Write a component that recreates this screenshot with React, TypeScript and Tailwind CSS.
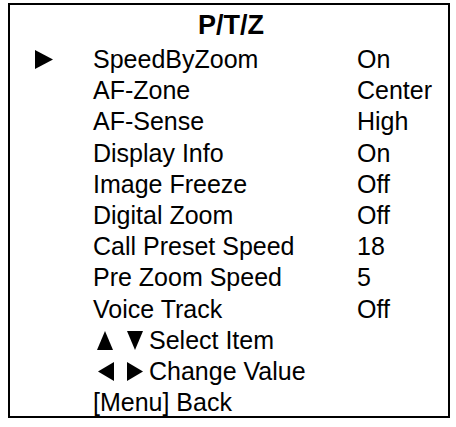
const rows: [string, string][] = [
  ['SpeedByZoom', 'On'],
  ['AF-Zone', 'Center'],
  ['AF-Sense', 'High'],
  ['Display Info', 'On'],
  ['Image Freeze', 'Off'],
  ['Digital Zoom', 'Off'],
  ['Call Preset Speed', '18'],
  ['Pre Zoom Speed', '5'],
  ['Voice Track', 'Off'],
];

const Tri = ({ dir }: { dir: 'up' | 'down' | 'left' | 'right' }) => {
  const pts = {
    up: '8,0 16,19 0,19',
    down: '0,0 16,0 8,19',
    left: '0,9.5 16,0 16,19',
    right: '0,0 16,9.5 0,19',
  }[dir];
  return (
    <svg width="16" height="19" viewBox="0 0 16 19" className="shrink-0">
      <polygon points={pts} fill="#000" />
    </svg>
  );
};

export default function App() {
  return (
    <div className="w-[456px] h-[427px] bg-white pt-[3px] pl-[8px] font-['Liberation_Sans',Arial,sans-serif] text-black">
      <div className="w-[442px] h-[415px] border-2 border-black">
        <div className="h-[39px] pt-[5px] pl-[4px] text-center text-[27px] font-bold leading-[30px]">P/T/Z</div>
        <div className="flex flex-col">
          {rows.map(([label, value], i) => (
            <div key={label} className="flex items-center h-[31.2px] text-[25px] leading-none">
              <div className="w-[83px] pl-[25px] flex items-center">
                {i === 0 && (
                  <svg width="18" height="19" viewBox="0 0 18 19">
                    <polygon points="0,0 18,9.5 0,19" fill="#000" />
                  </svg>
                )}
              </div>
              <div className="w-[264px]">{label}</div>
              <div>{value}</div>
            </div>
          ))}
          <div className="flex items-center h-[31.2px] text-[25px] leading-none pl-[87px]">
            <Tri dir="up" />
            <span className="w-[14px]" />
            <Tri dir="down" />
            <span className="ml-[6px]">Select Item</span>
          </div>
          <div className="flex items-center h-[31.2px] text-[25px] leading-none pl-[88px]">
            <Tri dir="left" />
            <span className="w-[13px]" />
            <Tri dir="right" />
            <span className="ml-[6px]">Change Value</span>
          </div>
          <div className="flex items-center h-[31.2px] text-[25px] leading-none pl-[83px]">[Menu] Back</div>
        </div>
      </div>
    </div>
  );
}
